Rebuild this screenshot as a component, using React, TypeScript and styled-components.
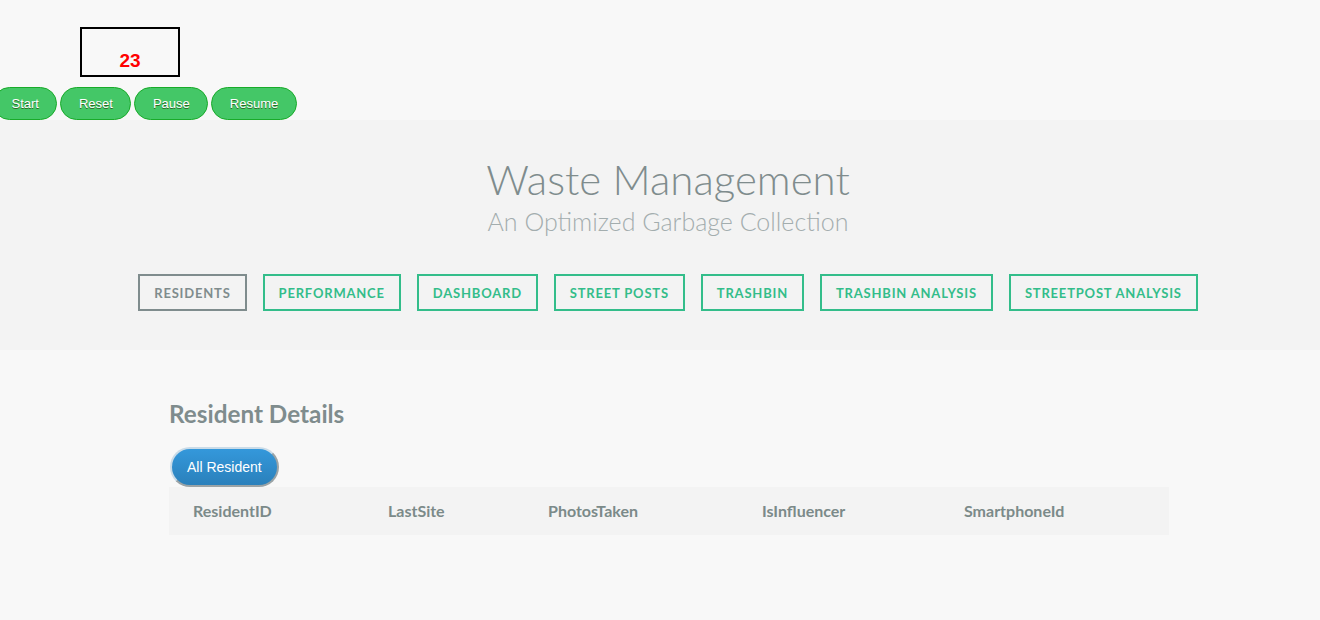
import React from "react";
import styled, { createGlobalStyle } from "styled-components";

const Global = createGlobalStyle`
  html, body { margin: 0; padding: 0; background: #f8f8f8; }
  body { font-family: "Lato", "Liberation Sans", sans-serif; }
  * { box-sizing: border-box; }
`;

const TimerArea = styled.div`
  padding-top: 27px;
`;

const TimerBox = styled.div`
  margin-left: 80px;
  width: 100px;
  height: 50px;
  border: 2px solid #000;
  display: flex;
  align-items: flex-end;
  justify-content: center;
  padding-bottom: 3px;
  font-family: "Liberation Sans", Arial, sans-serif;
  font-weight: bold;
  font-size: 19px;
  color: #ff0000;
`;

const ControlRow = styled.div`
  display: flex;
  gap: 3px;
  margin-top: 10px;
  margin-left: -7px;
  height: 33px;
`;

const GreenButton = styled.button`
  background: #44c767;
  border: 1px solid #18ab29;
  border-radius: 28px;
  color: #fff;
  font-family: "Liberation Sans", Arial, sans-serif;
  font-size: 13px;
  padding: 0 17.5px;
  height: 33px;
  text-shadow: 0 1px 0 #2f6627;
  cursor: pointer;
`;

const Hero = styled.header`
  background: #f3f3f3;
  height: 230px;
  padding-left: 16px;
  display: flex;
  flex-direction: column;
  align-items: center;
`;

const Title = styled.h1`
  margin: 34px 0 0;
  font-family: "Lato", sans-serif;
  font-weight: 300;
  font-size: 42px;
  line-height: 50px;
  color: #7f8c8d;
`;

const Subtitle = styled.h2`
  margin: 2px 0 0;
  font-family: "Lato", sans-serif;
  font-weight: 300;
  font-size: 25px;
  line-height: 30px;
  color: #a3adae;
`;

const Nav = styled.nav`
  display: flex;
  gap: 16px;
  margin-top: 38px;
`;

const NavButton = styled.button<{ $active?: boolean }>`
  height: 37px;
  padding: 0 14px;
  background: transparent;
  border: 2px solid ${(p) => (p.$active ? "#7f8c8d" : "#33bd8a")};
  color: ${(p) => (p.$active ? "#7f8c8d" : "#33bd8a")};
  font-family: "Lato", sans-serif;
  font-weight: 700;
  font-size: 13px;
  letter-spacing: 0.8px;
  text-transform: uppercase;
  cursor: pointer;
`;

const Main = styled.main`
  padding-left: 16px;
  display: flex;
  justify-content: center;
`;

const Section = styled.section`
  width: 1000px;
  padding-top: 47px;
  margin-left: 2px;
`;

const SectionTitle = styled.h3`
  margin: 0;
  font-family: "Lato", sans-serif;
  font-weight: 700;
  font-size: 24.3px;
  line-height: 34px;
  color: #7f8c8d;
`;

const BlueButton = styled.button`
  margin-top: 16px;
  margin-left: 1px;
  height: 40px;
  padding: 0 15px;
  border-radius: 20px;
  border: 2px solid #9aa3a6;
  border-top-color: #c9dbe8;
  border-left-color: #c9dbe8;
  background: linear-gradient(#3498db, #2a80bb);
  color: #fff;
  font-family: "Liberation Sans", Arial, sans-serif;
  font-size: 14px;
  cursor: pointer;
`;

const HeaderRow = styled.div`
  display: grid;
  grid-template-columns: 195px 160px 214px 202px 1fr;
  align-items: center;
  height: 48px;
  padding-left: 24px;
  padding-bottom: 2px;
  background: #f3f3f3;
`;

const HeaderCell = styled.div`
  font-family: "Lato", sans-serif;
  font-weight: 700;
  font-size: 16px;
  color: #7b8a89;
`;

const navItems = [
  "Residents",
  "Performance",
  "Dashboard",
  "Street Posts",
  "Trashbin",
  "Trashbin Analysis",
  "Streetpost Analysis",
];

const columns = ["ResidentID", "LastSite", "PhotosTaken", "IsInfluencer", "SmartphoneId"];

export default function App() {
  return (
    <>
      <Global />
      <TimerArea>
        <TimerBox>23</TimerBox>
        <ControlRow>
          <GreenButton>Start</GreenButton>
          <GreenButton>Reset</GreenButton>
          <GreenButton>Pause</GreenButton>
          <GreenButton>Resume</GreenButton>
        </ControlRow>
      </TimerArea>
      <Hero>
        <Title>Waste Management</Title>
        <Subtitle>An Optimized Garbage Collection</Subtitle>
        <Nav>
          {navItems.map((n, i) => (
            <NavButton key={n} $active={i === 0}>
              {n}
            </NavButton>
          ))}
        </Nav>
      </Hero>
      <Main>
        <Section>
          <SectionTitle>Resident Details</SectionTitle>
          <BlueButton>All Resident</BlueButton>
          <HeaderRow>
            {columns.map((c) => (
              <HeaderCell key={c}>{c}</HeaderCell>
            ))}
          </HeaderRow>
        </Section>
      </Main>
    </>
  );
}
